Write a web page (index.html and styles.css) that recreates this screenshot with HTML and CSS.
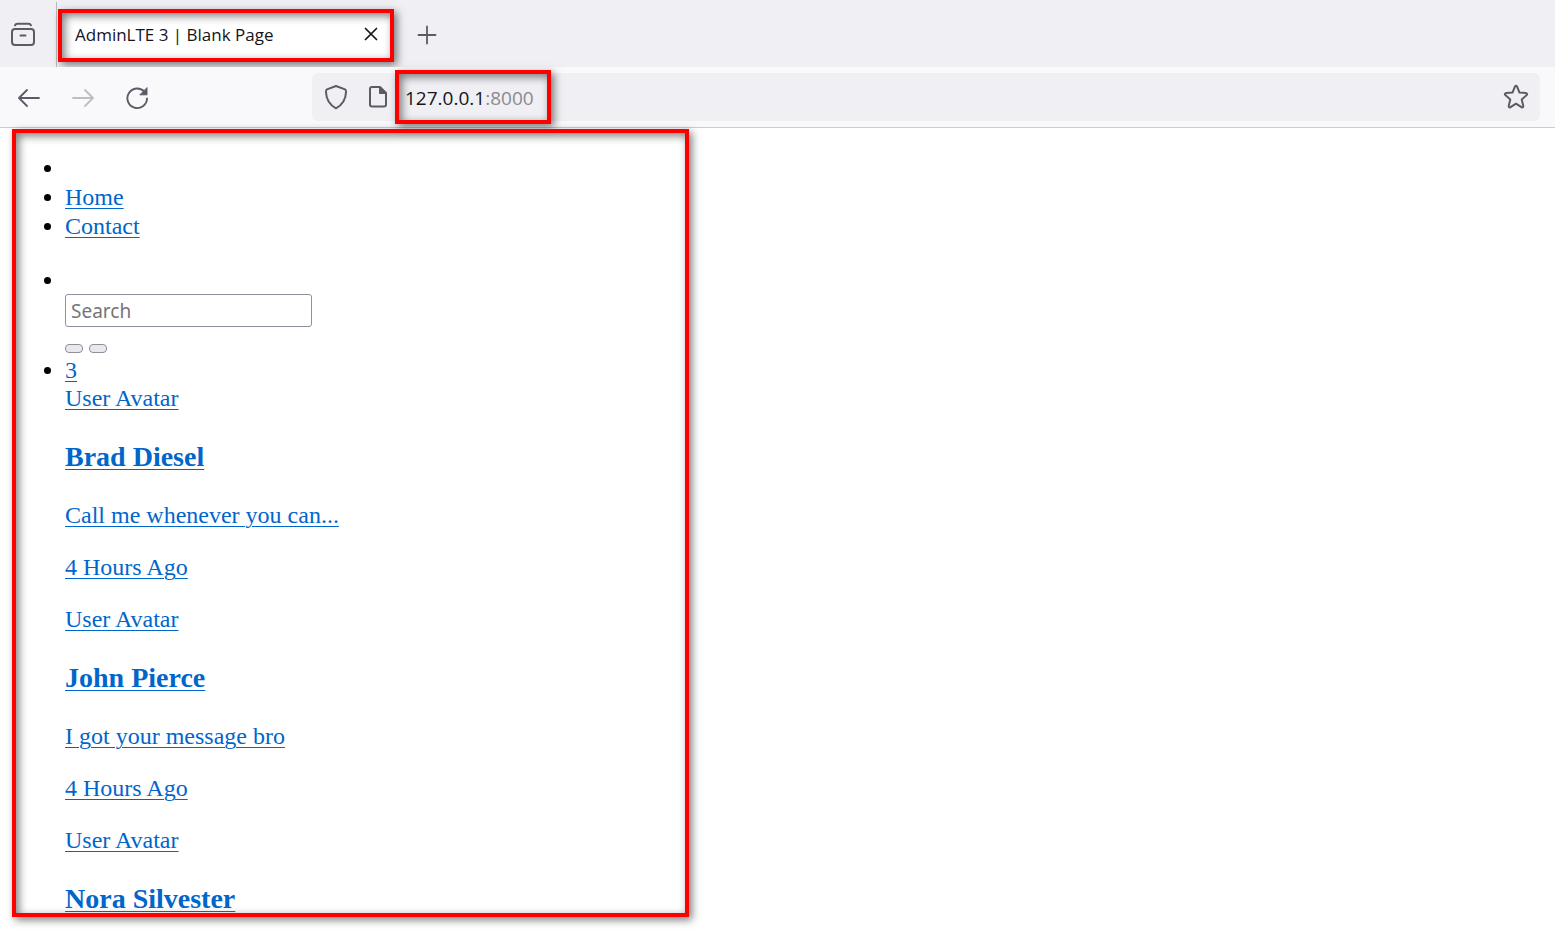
FILE: index.html
```html
<!DOCTYPE html>
<html lang="en">
   <head>
      <meta charset="UTF-8" />
      <meta name="viewport" content="width=device-width, initial-scale=1.0" />
      <title>AdminLTE 3 | Blank Page</title>
      <link rel="stylesheet" href="styles.css">
   </head>
   <body>
      <!-- tab strip -->
      <div class="tab-bar">
         <button type="button" class="icon-btn recent" aria-label="Recent browsing">
            <svg width="26" height="26" viewBox="0 0 26 26" fill="none" stroke="#5b5b66" stroke-width="2" stroke-linecap="round">
               <path d="M5 3.3Q5.600 1.800 7.500 1.800H18.500Q20.400 1.800 21 3.300" />
               <rect x="2" y="7" width="22" height="16" rx="3" />
               <path d="M10.500 13.500h5" />
            </svg>
         </button>
         <div class="tab highlight">
            <span>AdminLTE 3 | Blank Page</span>
            <button type="button" class="icon-btn" aria-label="Close tab">
               <svg width="14" height="14" viewBox="0 0 14 14" fill="none" stroke="#15141a" stroke-width="1.700" stroke-linecap="round">
                  <path d="M1.500 1.500l11 11M12.500 1.500l-11 11" />
               </svg>
            </button>
         </div>
         <button type="button" class="icon-btn new-tab" aria-label="New tab">
            <svg width="20" height="20" viewBox="0 0 20 20" fill="none" stroke="#5b5b66" stroke-width="1.800" stroke-linecap="round">
               <path d="M10 1.500v17M1.500 10h17" />
            </svg>
         </button>
      </div>

      <!-- navigation -->
      <div class="toolbar">
         <div class="nav-buttons">
            <button type="button" class="icon-btn" aria-label="Back">
               <svg width="24" height="24" viewBox="0 0 24 24" fill="none" stroke="#5b5b66" stroke-width="1.800" stroke-linecap="round" stroke-linejoin="round">
                  <path d="M22 13H2.500M10 5l-8 8 8 8" />
               </svg>
            </button>
            <button type="button" class="icon-btn" aria-label="Forward" disabled>
               <svg width="24" height="24" viewBox="0 0 24 24" fill="none" stroke="#bdbdc4" stroke-width="1.800" stroke-linecap="round" stroke-linejoin="round">
                  <path d="M2 13h19.500M14 5l8 8-8 8" />
               </svg>
            </button>
            <button type="button" class="icon-btn" aria-label="Reload">
               <svg width="24" height="26" viewBox="0 0 24 26" fill="none" stroke="#5b5b66" stroke-width="1.900" stroke-linecap="round">
                  <path d="M22 14.500A9.800 9.800 0 1 1 19.500 7.700" />
                  <path d="M22 4v6.800h-6.800z" fill="#5b5b66" stroke-width="1" stroke-linejoin="round" />
               </svg>
            </button>
         </div>
         <div class="url-bar">
            <svg class="shield" width="24" height="26" viewBox="0 0 24 26" fill="none" stroke="#5b5b66" stroke-width="2" stroke-linejoin="round">
               <path d="M12 2L21 5.400Q22.200 6 22 8C21.800 15.500 19 20.500 12 24.300C5 20.500 2.200 15.500 2 8Q1.800 6 3 5.400Z" />
            </svg>
            <svg class="page-icon" width="20" height="24" viewBox="0 0 20 24" fill="none" stroke="#5b5b66" stroke-width="2" stroke-linejoin="round">
               <path d="M4 2h8l6 6v11.500q0 2-2 2H4q-2 0-2-2V4q0-2 2-2z" />
               <path d="M11.500 2v6.500H18z" fill="#5b5b66" stroke-width="1" />
            </svg>
            <div class="address highlight" role="textbox" aria-label="Address" contenteditable="true" spellcheck="false">127.0.0.1<span>:8000</span></div>
            <button type="button" class="icon-btn bookmark" aria-label="Bookmark this page">
               <svg width="26" height="26" viewBox="0 0 26 26" fill="none" stroke="#5b5b66" stroke-width="2" stroke-linejoin="round">
                  <path d="M11.900 2.600q1.100-1.800 2.200 0l2.400 6 6.500.5q1.900.5.700 2l-5 4.300 1.600 6.500q0 2-1.800 1.300L13 19.700l-5.500 3.500q-1.800.7-1.800-1.300l1.600-6.500-5-4.300q-1.200-1.500.7-2l6.500-.5z" />
               </svg>
            </button>
         </div>
      </div>

      <!-- page -->
      <main>
         <div class="content highlight">
            <ul>
               <li></li>
               <li><a href="#">Home</a></li>
               <li><a href="#">Contact</a></li>
            </ul>

            <ul class="right-menu">
               <li>
                  &nbsp;
                  <form>
                     <input type="search" placeholder="Search" aria-label="Search">
                     <div class="form-buttons">
                        <button type="submit" aria-label="Submit search"></button>
                        <button type="reset" aria-label="Clear search"></button>
                     </div>
                  </form>
               </li>
               <li>
                  <a href="#">3</a>
                  <div>
                     <a href="#">
                        User Avatar
                        <h3>Brad Diesel</h3>
                        <p>Call me whenever you can...</p>
                        <p>4 Hours Ago</p>
                     </a>
                     <a href="#">
                        User Avatar
                        <h3>John Pierce</h3>
                        <p>I got your message bro</p>
                        <p>4 Hours Ago</p>
                     </a>
                     <a href="#">
                        User Avatar
                        <h3>Nora Silvester</h3>
                     </a>
                  </div>
               </li>
            </ul>
         </div>
      </main>
   </body>
</html>
```
FILE: styles.css
```css
* {
   box-sizing: border-box;
}

body {
   margin: 0;
   height: 100vh;
   display: flex;
   flex-direction: column;
   overflow: hidden;
   background: #fff;
   font-family: "Open Sans", "Noto Sans", sans-serif;
   color: #15141a;
}

svg {
   display: block;
   flex: none;
}

.icon-btn {
   padding: 0;
   border: 0;
   background: none;
}

/* red marker frames */
.highlight {
   border: 4px solid #f00;
   box-shadow: 3px 3px 8px rgba(0, 0, 0, 0.5), inset 3px 3px 8px rgba(0, 0, 0, 0.5);
}

.tab-bar {
   display: flex;
   align-items: center;
   height: 67px;
   flex: none;
   padding-left: 10px;
   background: #f0f0f4;
}

.recent {
   display: flex;
   align-items: center;
   align-self: stretch;
   width: 47px;
   margin: 2px 1px 0 0;
   border-right: 1px solid #b9b9c0;
}

.tab {
   display: flex;
   align-items: center;
   justify-content: space-between;
   width: 336px;
   height: 53px;
   margin-top: 4px;
   padding: 0 12px 3px 13px;
   background-color: #fff;
   font-size: 17px;
}

.new-tab {
   margin: 2px 0 0 23px;
}

.toolbar {
   display: flex;
   align-items: center;
   height: 61px;
   flex: none;
   padding: 0 15px 0 17px;
   background: #f9f9fb;
   border-bottom: 1px solid #ccc;
}

.nav-buttons {
   display: flex;
   align-items: center;
   gap: 30px;
   width: 295px;
}

.url-bar {
   display: flex;
   align-items: center;
   flex: 1;
   height: 48px;
   padding: 0 11px 0 12px;
   background: #f0f0f4;
   border-radius: 6px;
}

.page-icon {
   margin-left: 20px;
}

.address {
   width: 156px;
   height: 54px;
   margin-left: 7px;
   padding-left: 6px;
   font-size: 19px;
   line-height: 48px;
   white-space: nowrap;
   outline: none;
}

.address span {
   color: #8a8a90;
}

.bookmark {
   margin-left: auto;
}

main {
   flex: 1;
   min-height: 0;
   padding: 1px 12px 14px;
}

.content {
   width: 677px;
   max-width: 100%;
   height: 100%;
   overflow: hidden;
   font-family: "Liberation Serif", serif;
   font-size: 24px;
   line-height: 28px;
   color: #000;
}

ul {
   margin: 21px 0 25px;
   padding-left: 49px;
   line-height: 29px;
}

li {
   min-height: 28px;
}

.right-menu {
   margin: 0;
   line-height: 28px;
}

a {
   color: #0066cc;
   text-decoration-thickness: 1px;
   text-underline-offset: 3px;
}

input {
   display: block;
   width: 247px;
   height: 33px;
   padding: 0 5px;
   border: 1px solid #8f8f9d;
   border-radius: 3px;
   font-family: "Noto Sans", sans-serif;
   font-size: 19px;
}

input::placeholder {
   color: #757575;
}

.form-buttons {
   display: flex;
   gap: 6px;
   padding: 17px 0 3px;
}

.form-buttons button {
   width: 18px;
   height: 9px;
   padding: 0;
   border: 1px solid #8f8f9d;
   border-radius: 4px;
   background: #e9e9ed;
}

h3 {
   margin: 28px 0;
   font-size: 28px;
   line-height: 33px;
}

p {
   margin: 24px 0;
}
```
